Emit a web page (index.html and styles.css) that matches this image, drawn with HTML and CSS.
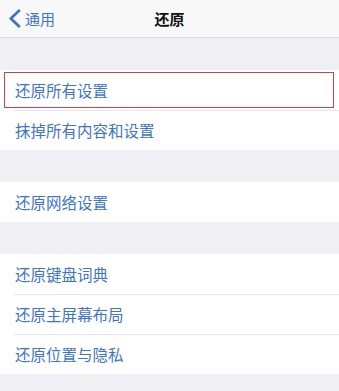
FILE: index.html
```html
<!DOCTYPE html>
<html lang="zh-CN">

<head>
    <meta charset="UTF-8">
    <meta name="viewport" content="width=device-width, initial-scale=1.0">
    <title>还原</title>
    <link rel="stylesheet" href="styles.css">
</head>

<body>
    <div class="nav-bar">
        <a class="nav-back" href="#">
            <svg class="chevron" width="13" height="19" viewBox="0 0 13 19">
                <path d="M11 1.8 L2.8 9.5 L11 17.2" fill="none" stroke="#3f74c9" stroke-width="2.8" stroke-linecap="round" stroke-linejoin="round"/>
            </svg>
            <span>通用</span>
        </a>
        <h1 class="nav-title">还原</h1>
    </div>

    <div class="spacer"></div>

    <div class="group">
        <div class="row row-highlight">还原所有设置</div>
        <div class="row">抹掉所有内容和设置</div>
    </div>

    <div class="spacer"></div>

    <div class="group">
        <div class="row">还原网络设置</div>
    </div>

    <div class="spacer"></div>

    <div class="group">
        <div class="row">还原键盘词典</div>
        <div class="row">还原主屏幕布局</div>
        <div class="row">还原位置与隐私</div>
    </div>
</body>

</html>
```

FILE: styles.css
```css
* {
    margin: 0;
    padding: 0;
    box-sizing: border-box;
}

body {
    background-color: #efeff4;
    font-family: "Noto Sans CJK SC", "Noto Sans", sans-serif;
}

.nav-bar {
    height: 38px;
    background-color: #f8f8f8;
    border-bottom: 1px solid #dcdcdc;
    display: flex;
    align-items: center;
    justify-content: center;
    position: relative;
}

.nav-back {
    position: absolute;
    left: 8px;
    top: 0;
    height: 37px;
    display: flex;
    align-items: center;
    gap: 4px;
    color: #3f74c9;
    text-decoration: none;
    font-size: 15px;
}

.nav-title {
    font-size: 15px;
    font-weight: bold;
    color: #111;
}

.spacer {
    height: 32px;
}

.group {
    background-color: #fff;
}

.row {
    height: 40px;
    display: flex;
    align-items: center;
    padding-left: 15px;
    font-size: 15.5px;
    color: #3f74c9;
    position: relative;
}

.row + .row::before {
    content: "";
    position: absolute;
    top: 0;
    left: 14px;
    right: 0;
    border-top: 1px solid #e6e6ea;
}

.row-highlight::after {
    content: "";
    position: absolute;
    left: 4px;
    right: 5px;
    top: 2px;
    bottom: 2px;
    border: 1px solid #d0414b;
}
```
